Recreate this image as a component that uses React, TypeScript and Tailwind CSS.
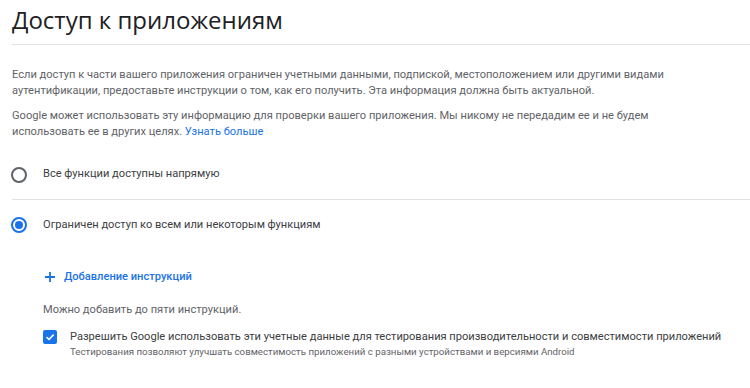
export default function App() {
  return (
    <div className="w-[750px] h-[388px] overflow-hidden bg-white pl-3 font-['Roboto',sans-serif] text-[11.1px] text-[#5f6368]">
      <div className="h-[45px] border-b border-[#e0e0e0]">
        <h1 className="pt-[3px] font-['Open_Sans',sans-serif] text-[24px] leading-[34px] text-[#202124]">
          Доступ к приложениям
        </h1>
      </div>

      <div className="pt-[22px] pr-6 leading-[16px]">
        <p>
          Если доступ к части вашего приложения ограничен учетными данными, подпиской, местоположением или другими видами
          <br />
          аутентификации, предоставьте инструкции о том, как его получить. Эта информация должна быть актуальной.
        </p>
        <p className="mt-[9px]">
          Google может использовать эту информацию для проверки вашего приложения. Мы никому не передадим ее и не будем
          <br />
          использовать ее в других целях. <span className="text-[#1a73e8]">Узнать больше</span>
        </p>
      </div>

      <div className="mt-[10px]">
        <label className="flex h-[50px] items-center border-b border-[#e0e0e0] text-[#3c4043]">
          <span className="ml-[-1px] flex h-4 w-4 items-center justify-center rounded-full border-2 border-[#5f6368]" />
          <span className="ml-[16px]">Все функции доступны напрямую</span>
        </label>
        <label className="flex h-[50px] items-center text-[#3c4043]">
          <span className="ml-[-1px] flex h-4 w-4 items-center justify-center rounded-full border-2 border-[#1a73e8]">
            <span className="h-2 w-2 rounded-full bg-[#1a73e8]" />
          </span>
          <span className="ml-[16px]">Ограничен доступ ко всем или некоторым функциям</span>
        </label>
      </div>

      <div className="pl-[31px]">
        <button className="mt-[14px] flex h-[26px] items-center gap-[8px] font-medium text-[#1a73e8]">
          <svg width="12" height="12" viewBox="0 0 12 12" className="ml-[1px]">
            <path d="M6 1v10M1 6h10" stroke="#1a73e8" strokeWidth="1.8" />
          </svg>
          <span>Добавление инструкций</span>
        </button>

        <p className="mt-[12px] leading-[16px]">Можно добавить до пяти инструкций.</p>

        <div className="mt-[11px] flex items-start gap-[13px]">
          <span className="mt-[1px] flex h-[14px] w-[14px] shrink-0 items-center justify-center rounded-[2px] bg-[#1a73e8]">
            <svg width="10" height="10" viewBox="0 0 10 10">
              <path d="M1.5 5.2 4 7.5 8.6 2.6" fill="none" stroke="white" strokeWidth="1.6" />
            </svg>
          </span>
          <div>
            <div className="leading-[16px] text-[#3c4043]">
              Разрешить Google использовать эти учетные данные для тестирования производительности и совместимости приложений
            </div>
            <div className="text-[9.7px] leading-[14px] text-[#5f6368]">
              Тестирования позволяют улучшать совместимость приложений с разными устройствами и версиями Android
            </div>
          </div>
        </div>
      </div>
    </div>
  );
}
